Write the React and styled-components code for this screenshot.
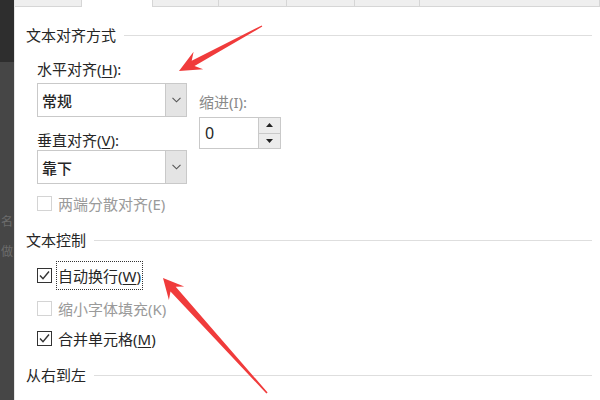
import React from "react";
import styled, { createGlobalStyle } from "styled-components";

const Global = createGlobalStyle`
  html, body { margin: 0; padding: 0; background: #fff; }
  body { font-family: "Noto Sans", "Noto Sans CJK SC", sans-serif; }
`;

const Screen = styled.div`
  position: relative;
  width: 600px;
  height: 400px;
  overflow: hidden;
  display: flex;
  background: #fff;
`;

const LeftStrip = styled.div`
  width: 14px;
  flex: none;
  background: linear-gradient(#2e2e2e 0 62px, #464646 62px);
  overflow: hidden;
  display: flex;
  flex-direction: column;
  align-items: center;
  padding-top: 214px;
  box-sizing: border-box;
  gap: 16px;
`;

const GhostChar = styled.span`
  font-size: 12px;
  line-height: 14px;
  color: #6c6c6c;
  font-family: "Noto Sans CJK SC", sans-serif;
`;

const Main = styled.div`
  flex: 1;
  display: flex;
  flex-direction: column;
  border-left: 1px solid #e6e6e6;
`;

const TabBar = styled.div`
  height: 7px;
  display: flex;
  flex: none;
`;

const Tab = styled.div`
  width: ${(p) => p.$w}px;
  flex: ${(p) => (p.$grow ? 1 : "none")};
  box-sizing: border-box;
  background: ${(p) => (p.$active ? "#fff" : "#efefef")};
  border-right: 1px solid #d6d6d6;
  border-bottom: ${(p) => (p.$active ? "none" : "1px solid #d6d6d6")};
`;

const Body = styled.div`
  flex: 1;
  padding: 18px 8px 0 11px;
  display: flex;
  flex-direction: column;
  color: #262626;
  font-size: 15px;
`;

const Heading = styled.div`
  height: 20px;
  line-height: 20px;
  display: flex;
  align-items: center;
  gap: 8px;
  margin-top: ${(p) => p.$mt || 0}px;
  white-space: nowrap;
  &::after {
    content: "";
    flex: 1;
    height: 1px;
    background: #dedede;
  }
`;

const Indented = styled.div`
  padding-left: 11px;
  display: flex;
  flex-direction: column;
`;

const AlignRow = styled.div`
  display: flex;
  gap: 12px;
  margin-top: 14px;
`;

const Col = styled.div`
  display: flex;
  flex-direction: column;
  width: ${(p) => p.$w}px;
  padding-top: ${(p) => p.$pt || 0}px;
`;

const Label = styled.div`
  height: 20px;
  line-height: 20px;
  white-space: nowrap;
  margin-top: ${(p) => p.$mt || 0}px;
  color: ${(p) => (p.$disabled ? "#8a8a8a" : "#262626")};
  u { text-decoration: underline; text-underline-offset: 2px; }
`;

const Combo = styled.div`
  height: 34px;
  box-sizing: border-box;
  border: 1px solid #c9c9c9;
  display: flex;
  margin-top: ${(p) => p.$mt || 0}px;
  background: #fff;
`;

const ComboText = styled.div`
  flex: 1;
  padding-left: 4px;
  display: flex;
  align-items: center;
  font-weight: 500;
`;

const ComboButton = styled.div`
  width: 20px;
  background: #e4e4e4;
  border-left: 1px solid #c9c9c9;
  display: flex;
  align-items: center;
  justify-content: center;
`;

const Spin = styled.div`
  width: 82px;
  height: 32px;
  box-sizing: border-box;
  border: 1px solid #c9c9c9;
  display: flex;
  margin-top: 5px;
`;

const SpinText = styled.div`
  flex: 1;
  padding-left: 5px;
  display: flex;
  align-items: center;
  font-size: 16px;
`;

const SpinButtons = styled.div`
  width: 21px;
  border-left: 1px solid #c9c9c9;
  display: flex;
  flex-direction: column;
  background: #ececec;
`;

const SpinHalf = styled.div`
  flex: 1;
  display: flex;
  align-items: center;
  justify-content: center;
  & + & { border-top: 1px solid #c9c9c9; }
`;

const CheckRow = styled.div`
  display: flex;
  align-items: center;
  gap: 6px;
  height: ${(p) => p.$h || 20}px;
  margin-top: ${(p) => p.$mt || 0}px;
  color: ${(p) => (p.$disabled ? "#9a9a9a" : "#262626")};
  white-space: nowrap;
  u { text-decoration: underline; text-underline-offset: 2px; }
`;

const Box = styled.div`
  width: 15px;
  height: 15px;
  box-sizing: border-box;
  border: 1px solid ${(p) => (p.$disabled ? "#d4d4d4" : "#333")};
  display: flex;
  align-items: center;
  justify-content: center;
  background: #fff;
  flex: none;
`;

const Focus = styled.span`
  outline: 1px dotted #333;
  padding: 3px 1px;
  margin-left: -1px;
`;

const Overlay = styled.svg`
  position: absolute;
  inset: 0;
  pointer-events: none;
`;

const Chevron = () => (
  <svg width="9" height="6" viewBox="0 0 9 6">
    <path d="M0.5 0.8 L4.5 4.8 L8.5 0.8" fill="none" stroke="#555" strokeWidth="1.1" />
  </svg>
);

const Check = () => (
  <svg width="13" height="13" viewBox="0 0 13 13">
    <path d="M2 6.5 L5 9.8 L11 2.5" fill="none" stroke="#333" strokeWidth="1.4" />
  </svg>
);

const Tri = ({ up }) => (
  <svg width="7" height="4" viewBox="0 0 7 4">
    <path d={up ? "M0 4 L3.5 0 L7 4 Z" : "M0 0 L7 0 L3.5 4 Z"} fill="#222" />
  </svg>
);

export default function App() {
  return (
    <>
      <Global />
      <Screen>
        <LeftStrip>
          <GhostChar>名</GhostChar>
          <GhostChar>做</GhostChar>
        </LeftStrip>
        <Main>
          <TabBar>
            <Tab $w={67} />
            <Tab $w={71} $active />
            <Tab $w={66} />
            <Tab $w={68} />
            <Tab $w={68} />
            <Tab $w={65} />
            <Tab $grow />
          </TabBar>
          <Body>
            <Heading>文本对齐方式</Heading>
            <Indented>
              <AlignRow>
                <Col $w={150}>
                  <Label>水平对齐(<u>H</u>):</Label>
                  <Combo $mt={4}>
                    <ComboText>常规</ComboText>
                    <ComboButton><Chevron /></ComboButton>
                  </Combo>
                  <Label $mt={13}>垂直对齐(<u>V</u>):</Label>
                  <Combo>
                    <ComboText>靠下</ComboText>
                    <ComboButton><Chevron /></ComboButton>
                  </Combo>
                </Col>
                <Col $w={90} $pt={33}>
                  <Label $disabled>缩进(I):</Label>
                  <Spin>
                    <SpinText>0</SpinText>
                    <SpinButtons>
                      <SpinHalf><Tri up /></SpinHalf>
                      <SpinHalf><Tri /></SpinHalf>
                    </SpinButtons>
                  </Spin>
                </Col>
              </AlignRow>
              <CheckRow $mt={9} $disabled>
                <Box $disabled />
                两端分散对齐(E)
              </CheckRow>
            </Indented>
            <Heading $mt={17}>文本控制</Heading>
            <Indented>
              <CheckRow $mt={12} $h={26}>
                <Box><Check /></Box>
                <Focus>自动换行(<u>W</u>)</Focus>
              </CheckRow>
              <CheckRow $mt={10} $disabled>
                <Box $disabled />
                缩小字体填充(K)
              </CheckRow>
              <CheckRow $mt={10}>
                <Box><Check /></Box>
                <span>合并单元格(<u>M</u>)</span>
              </CheckRow>
            </Indented>
            <Heading $mt={17}>从右到左</Heading>
          </Body>
        </Main>
        <Overlay width="600" height="400" viewBox="0 0 600 400">
          <polygon
            fill="#f03b3b"
            points="179,71 193.6,51.7 191.7,60.7 261.7,25.4 262.3,26.6 194.5,65.9 203.2,69.3"
          />
          <polygon
            fill="#f03b3b"
            points="163,278 184.2,286.4 175.7,286.8 267.6,392.5 266.4,393.5 170.5,291.4 168.9,299.9"
          />
        </Overlay>
      </Screen>
    </>
  );
}
